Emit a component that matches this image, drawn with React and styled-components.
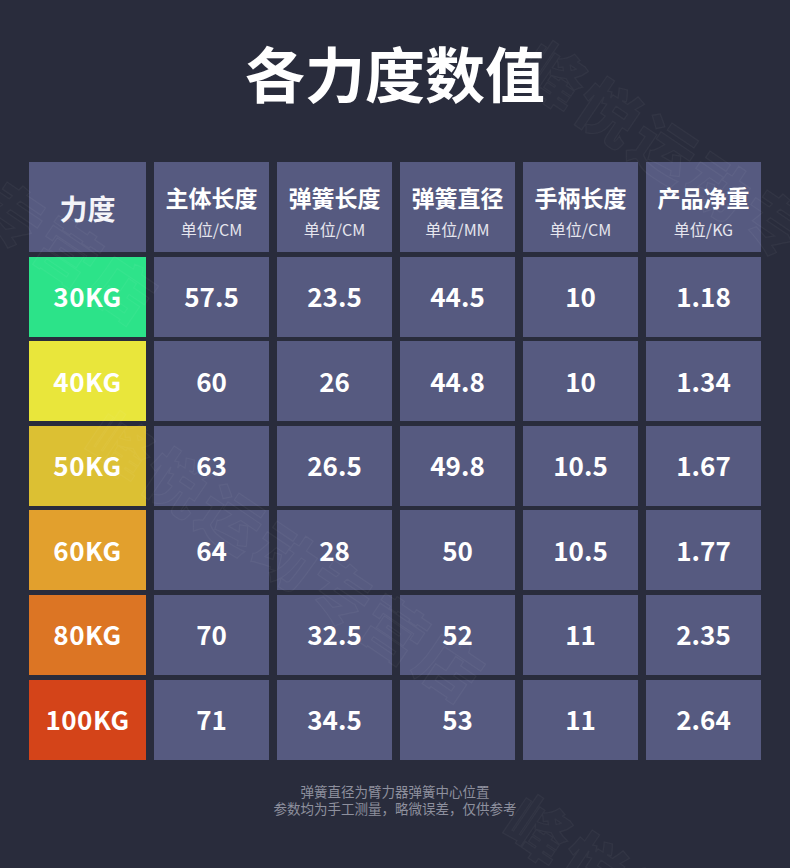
import React from "react";
import styled, { createGlobalStyle } from "styled-components";

const GlobalStyle = createGlobalStyle`
  html, body {
    margin: 0;
    padding: 0;
    background: #292c3c;
  }
  * {
    box-sizing: border-box;
  }
`;

const columns = [
  { title: "主体长度", unit: "单位/CM" },
  { title: "弹簧长度", unit: "单位/CM" },
  { title: "弹簧直径", unit: "单位/MM" },
  { title: "手柄长度", unit: "单位/CM" },
  { title: "产品净重", unit: "单位/KG" },
];

const rows = [
  { label: "30KG", color: "#2ce389", values: ["57.5", "23.5", "44.5", "10", "1.18"] },
  { label: "40KG", color: "#e9e63b", values: ["60", "26", "44.8", "10", "1.34"] },
  { label: "50KG", color: "#dcc033", values: ["63", "26.5", "49.8", "10.5", "1.67"] },
  { label: "60KG", color: "#e2a02d", values: ["64", "28", "50", "10.5", "1.77"] },
  { label: "80KG", color: "#dc7524", values: ["70", "32.5", "52", "11", "2.35"] },
  { label: "100KG", color: "#d44419", values: ["71", "34.5", "53", "11", "2.64"] },
];

// faint shop watermark, repeated along the diagonal
const marks = [
  { left: 555, top: 18 },
  { left: 122, top: 388 },
  { left: -205, top: 10 },
  { left: 540, top: 772 },
];

export default function App() {
  return (
    <PAGE>
      <GlobalStyle />
      {marks.map((m, i) => (
        <Watermark key={i} style={{ left: m.left, top: m.top }}>
          峰悦运动专营店
        </Watermark>
      ))}
      <Header>
        <Title>各力度数值</Title>
      </Header>
      <Table>
        <Cell>
          <CornerText>力度</CornerText>
        </Cell>
        {columns.map((c) => (
          <HeadCell key={c.title}>
            <HeadTitle>{c.title}</HeadTitle>
            <HeadUnit>{c.unit}</HeadUnit>
          </HeadCell>
        ))}
        {rows.map((r) => (
          <React.Fragment key={r.label}>
            <Cell $bg={r.color}>
              <Value $spaced>{r.label}</Value>
            </Cell>
            {r.values.map((v, i) => (
              <Cell key={i}>
                <Value>{v}</Value>
              </Cell>
            ))}
          </React.Fragment>
        ))}
      </Table>
      <Footer>
        <FootLine>弹簧直径为臂力器弹簧中心位置</FootLine>
        <FootLine>参数均为手工测量，略微误差，仅供参考</FootLine>
      </Footer>
    </PAGE>
  );
}

const PAGE = styled.div`
  position: relative;
  width: 790px;
  height: 868px;
  overflow: hidden;
  background: #292c3c;
  font-family: "Noto Sans CJK SC", "Noto Sans", sans-serif;
  color: #ffffff;
`;

const Watermark = styled.div`
  position: absolute;
  z-index: 2;
  pointer-events: none;
  transform-origin: left top;
  transform: rotate(34deg);
  white-space: nowrap;
  font-size: 62px;
  font-weight: 900;
  letter-spacing: 4px;
  color: rgba(255, 255, 255, 0.01);
  -webkit-text-stroke: 1.2px rgba(255, 255, 255, 0.045);
`;

const Header = styled.div`
  height: 162px;
  display: flex;
  align-items: center;
  justify-content: center;
  padding-bottom: 18px;
`;

const Title = styled.h1`
  margin: 0;
  font-size: 60px;
  line-height: 1;
  font-weight: 700;
  color: #ffffff;
`;

const Table = styled.div`
  display: grid;
  grid-template-columns: 117px repeat(5, 115px);
  grid-template-rows: 90px repeat(6, 80px);
  column-gap: 8px;
  row-gap: 4.6px;
  margin: 0 29px;
  position: relative;
  z-index: 1;
`;

const Cell = styled.div`
  background: ${(p) => p.$bg || "#565a80"};
  display: flex;
  flex-direction: column;
  align-items: center;
  justify-content: center;
`;

const HeadCell = styled(Cell)`
  padding-top: 8px;
`;

const CornerText = styled.div`
  font-size: 28px;
  font-weight: 700;
  color: #f4f4f8;
  margin-top: 2px;
`;

const HeadTitle = styled.div`
  font-size: 23px;
  font-weight: 700;
  line-height: 28px;
  color: #ffffff;
`;

const HeadUnit = styled.div`
  font-size: 16px;
  line-height: 20px;
  margin-top: 8px;
  color: #e6e6ee;
`;

const Value = styled.div`
  font-size: 26px;
  font-weight: 700;
  color: #ffffff;
  margin-top: -2px;
  letter-spacing: ${(p) => (p.$spaced ? "0.5px" : "0")};
`;

const Footer = styled.div`
  margin-top: 23px;
  display: flex;
  flex-direction: column;
  align-items: center;
  gap: 1px;
  font-size: 13.5px;
  line-height: 16px;
  color: #8e909e;
`;

const FootLine = styled.div`
  white-space: nowrap;
`;
